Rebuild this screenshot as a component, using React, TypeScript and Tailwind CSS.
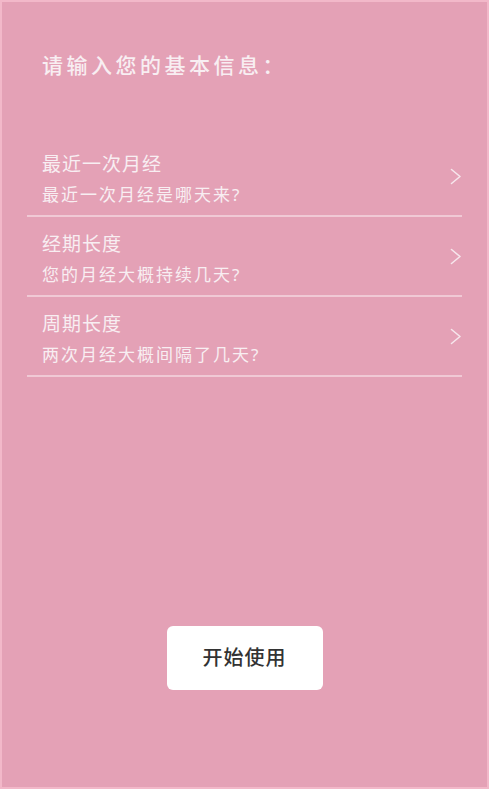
const ROWS = [
  { title: '最近一次月经', hint: '最近一次月经是哪天来?' },
  { title: '经期长度', hint: '您的月经大概持续几天?' },
  { title: '周期长度', hint: '两次月经大概间隔了几天?' },
];

function Chevron() {
  return (
    <svg width="12" height="17" viewBox="0 0 12 17" fill="none" className="shrink-0">
      <polyline points="1.5,1.5 10,8.5 1.5,15.5" stroke="#f6e6ec" strokeWidth="1.6" strokeLinecap="round" strokeLinejoin="round" />
    </svg>
  );
}

export default function App() {
  return (
    <div
      className="h-[789px] w-full border-2 border-[#f2b8c9] bg-[#e4a1b6] flex flex-col"
      style={{ fontFamily: '"Noto Sans", "Noto Sans CJK SC", sans-serif' }}
    >
      {/* heading */}
      <h1 className="pl-[40px] pt-[49px] text-[21px] leading-[28px] tracking-[3.5px] font-medium text-[#f8eef2]">
        请输入您的基本信息：
      </h1>

      {/* form rows */}
      <div className="mt-[58px] mx-[25px]">
        {ROWS.map((row) => (
          <div
            key={row.title}
            className="h-[80px] box-border border-b-2 border-[#f0c9d5] flex items-center justify-between pl-[15px]"
          >
            <div className="flex flex-col pt-[6px]">
              <span className="text-[19px] leading-[26px] tracking-[1px] text-[#f8eef2]">{row.title}</span>
              <span className="mt-[5px] text-[17px] leading-[26px] tracking-[2px] text-[#f8eef2]">{row.hint}</span>
            </div>
            <Chevron />
          </div>
        ))}
      </div>

      {/* start button */}
      <div className="mt-[249px] flex justify-center">
        <button className="w-[156px] h-[64px] rounded-[6px] bg-white text-[20px] tracking-[1px] text-[#333333] font-medium">
          开始使用
        </button>
      </div>
    </div>
  );
}
